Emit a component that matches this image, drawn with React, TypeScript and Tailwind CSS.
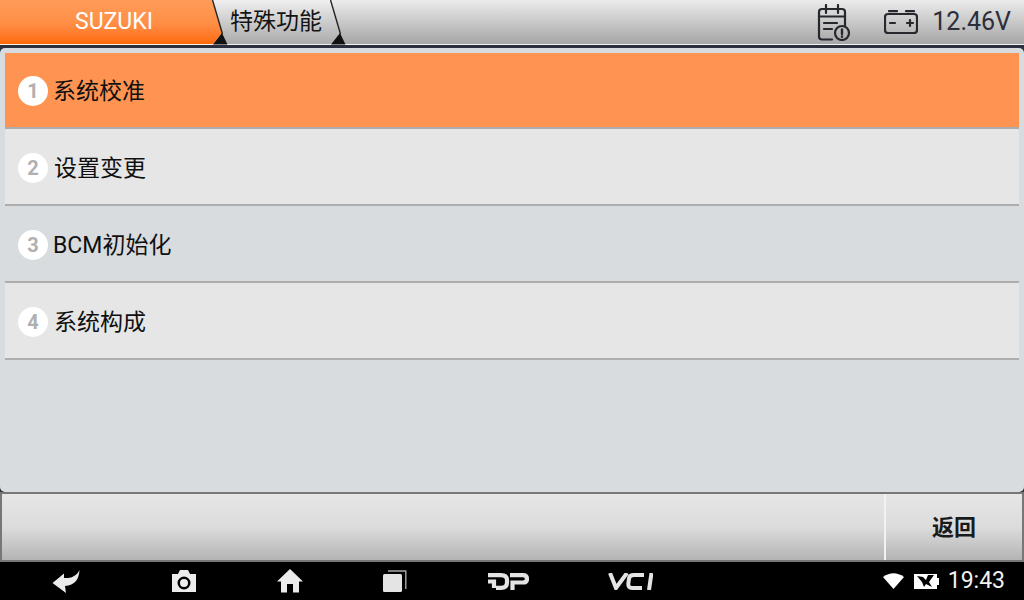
const font = "font-['Roboto','Noto_Sans_CJK_SC',sans-serif]";

function Chevron({ cls }: { cls: string }) {
  return (
    <svg width="18" height="45" viewBox="0 0 18 45" className={`absolute top-0 z-20 ${cls}`}>
      <path d="M1 44.5 L10 33 L15.5 44.5 Z" fill="#111" />
      <path d="M0.5 0 L10.5 34" stroke="#222" strokeWidth="1.4" fill="none" />
    </svg>
  );
}

function Row({ n, label, cls, indent }: { n: number; label: string; cls: string; indent: string }) {
  return (
    <div className={`flex items-center pl-[13px] pt-[2px] border-b-2 border-[#adadad] ${cls}`}>
      <span className="flex items-center justify-center w-[30px] h-[30px] rounded-full bg-white text-[#b0b0b0] text-[20px] font-bold shrink-0">{n}</span>
      <span className={`text-[23px] pt-[3px] text-[#101010] ${indent}`}>{label}</span>
    </div>
  );
}

export default function App() {
  return (
    <div className={`w-[1024px] h-[600px] flex flex-col overflow-hidden bg-black ${font}`}>
      {/* top bar */}
      <div className="relative h-[44px] flex items-stretch bg-gradient-to-b from-[#ececec] to-[#a6a6a6] shrink-0">
        <div className="relative w-[222px] -mr-[10px] flex items-center justify-center pl-[6px] bg-gradient-to-b from-[#ff9c58] via-[#ff9048] to-[#ff6a00] text-white text-[23px] [clip-path:polygon(0_0,212px_0,222px_33px,213px_44px,0_44px)] z-10">
          SUZUKI
        </div>
        <div className="w-[128px] -mr-[10px] flex items-center justify-start pl-[18px] pt-[1px] bg-gradient-to-b from-[#efefef] to-[#ababab] text-[#141414] text-[23px] [clip-path:polygon(0_0,118px_0,128px_33px,119px_44px,0_44px)]">
          特殊功能
        </div>
        <Chevron cls="left-[212px]" />
        <Chevron cls="left-[330px]" />
        <div className="flex-1 flex items-center justify-end pr-[13px]">
          <svg width="34" height="37" viewBox="0 0 34 37" className="mr-[33px] text-[#26282e]" fill="none" stroke="currentColor" strokeWidth="2.2" strokeLinecap="round">
            <path d="M15 35.5H5a3 3 0 0 1-3-3V8a3 3 0 0 1 3-3h20a3 3 0 0 1 3 3v14" />
            <path d="M9 1v8M21 1v8M2 12.5h26M7 19h13M7 25h8" />
            <circle cx="25" cy="29" r="7" />
            <path d="M25 25.5v4.5" strokeWidth="2.4" />
            <path d="M25 32.5v.2" strokeWidth="2.4" />
          </svg>
          <svg width="34" height="24" viewBox="0 0 34 24" className="mr-[14px] text-[#26282e]" fill="none" stroke="currentColor" strokeWidth="2.2" strokeLinecap="round">
            <rect x="1" y="4" width="32" height="19" rx="3" />
            <path d="M5 1.2h8M22 1.2h8M6 13h5M23 13h6M26 10v6" />
          </svg>
          <span className="text-[25px] text-[#2c2f3a]">12.46V</span>
        </div>
      </div>
      <div className="h-px bg-[#f2f2f2] shrink-0" />
      <div className="h-[3px] bg-[#2b2f3b] shrink-0" />

      {/* main */}
      <div className="h-[444px] bg-[#2b2f3b] shrink-0">
        <div className="h-full rounded-[5px] bg-[#d8dcdf] pt-[5px] px-[5px]">
          <Row n={1} label="系统校准" cls="bg-[#ff9452] h-[76px]" indent="ml-[5px]" />
          <Row n={2} label="设置变更" cls="bg-[#e6e6e6] h-[77px]" indent="ml-[6px]" />
          <Row n={3} label="BCM初始化" cls="bg-[#d8dcdf] h-[77px]" indent="ml-[5px]" />
          <Row n={4} label="系统构成" cls="bg-[#e6e6e6] h-[77px]" indent="ml-[6px]" />
        </div>
      </div>

      {/* bottom buttons */}
      <div className="h-[70px] flex bg-gradient-to-b from-[#e6e6e6] via-[#dcdcdc] to-[#b4b4b4] border-y-2 border-[#777] border-l-2 border-r-2 shrink-0">
        <div className="flex-1" />
        <div className="w-[138px] flex items-center justify-center border-l-2 border-[#f2f2f2] text-[22px] font-bold text-[#1a1a1a]">返回</div>
      </div>

      {/* nav */}
      <div className="flex-1 relative bg-black text-[#eaeaea]">
        <div className="h-full flex items-center">
          <svg width="28" height="23" viewBox="0 0 28 23" className="ml-[52px]" fill="#ececec">
            <path d="M0.5 13 L12 3.5 L12 8 C18 8.5 24 7 27.5 0 C27 9 23 15.5 13 16 L14 23 Z" />
          </svg>
          <svg width="26" height="24" viewBox="0 0 26 24" className="ml-[91px]">
            <path fillRule="evenodd" fill="#ececec" d="M1 5h6l2-4h8l2 4h6v18H1Z M13 7.5a6.5 6.5 0 1 0 0 13 6.5 6.5 0 0 0 0-13Z M13 10a4 4 0 1 1 0 8 4 4 0 0 1 0-8Z" />
          </svg>
          <svg width="26" height="24" viewBox="0 0 26 24" className="ml-[80px]" fill="#ececec">
            <path d="M13 0 L26 12.5 H22 V23.5 H16 V15 H10 V23.5 H4 V12.5 H0 Z" />
          </svg>
          <svg width="24" height="22" viewBox="0 0 24 22" className="ml-[80px]" fill="#e4e4e4">
            <rect x="0" y="4" width="19" height="18" rx="1.5" />
            <path d="M5 1 H22.8 V19" fill="none" stroke="#a8a8a8" strokeWidth="1.4" />
          </svg>
          <svg width="41" height="17" viewBox="0 0 41 17" className="ml-[81px]" fill="none" stroke="#e4e4e4" strokeWidth="4.2">
            <path d="M0 2.1 H13 Q19 2.1 19 7 V9.5 Q19 14.9 13 14.9 H8" />
            <path d="M0 8.5 H6 V15" />
            <path d="M24.5 17 V9.5 H35 Q39 9.5 39 5.8 Q39 2.1 35 2.1 H22" />
          </svg>
          <svg width="45" height="17" viewBox="0 0 45 17" className="ml-[79px]" fill="none" stroke="#e4e4e4" strokeWidth="4">
            <path d="M2 0 L8 15 L19 0" />
            <path d="M36 2.1 H26 Q21.5 2.1 21 5.5 L20.3 11 Q20 14.9 24 14.9 H34" />
            <path d="M43.5 0 L41 17" />
          </svg>
        </div>
        <div className="absolute inset-y-0 right-[19px] flex items-center">
          <svg width="21" height="16" viewBox="0 0 21 16" fill="#fff" className="mr-[10px]">
            <path d="M0 4 Q10.5 -3.5 21 4 L10.5 16 Z" />
          </svg>
          <svg width="25" height="15" viewBox="0 0 25 15" className="mr-[9px]">
            <path fill="#fff" d="M0 0h23v4h2v7h-2v4H0Z" />
            <path fill="#000" d="M3 2 L9 3 L12 6 L14 1 L20 1 L15 8 L18 13 L12 10 L10 13 L8 8 Z" />
          </svg>
          <span className="text-[23px] text-[#f2f2f2]">19:43</span>
        </div>
      </div>
    </div>
  );
}
